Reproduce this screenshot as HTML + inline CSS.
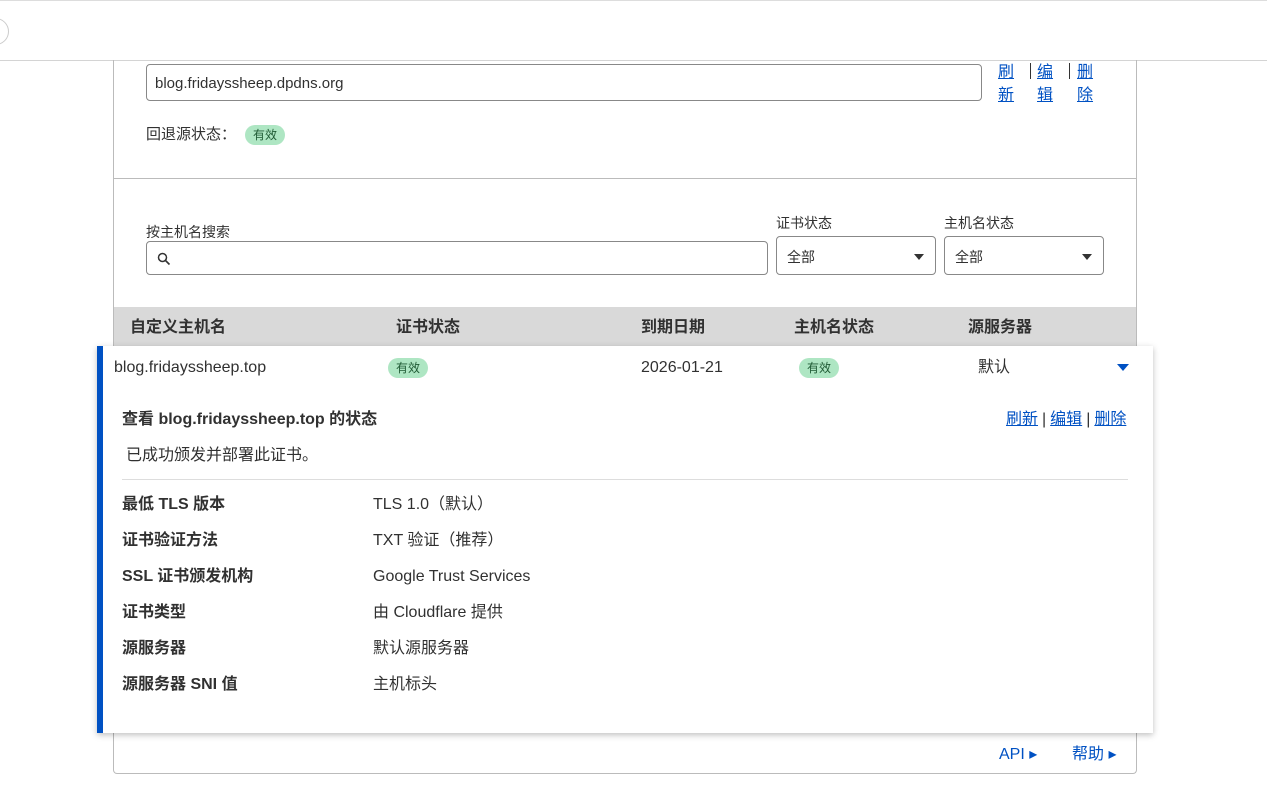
<!DOCTYPE html>
<html><head><meta charset="utf-8"><style>
*{box-sizing:border-box;margin:0;padding:0}
body{width:1267px;height:799px;overflow:hidden;background:#fff;font-family:"Liberation Sans","Noto Sans CJK SC",sans-serif;color:#313131;font-size:16px;position:relative}
.a{position:absolute;white-space:nowrap;line-height:20px}
.lnk{color:#0051c3;text-decoration:underline}
.badge{position:absolute;background:#aee6c3;color:#1f5a34;font-size:12px;border-radius:10px;height:20px;line-height:20px;padding:0 8px}
.box{position:absolute;border:1px solid #888;border-radius:4px;background:#fff}
.b{font-weight:bold}
.caret{position:absolute;width:0;height:0;border-left:5px solid transparent;border-right:5px solid transparent;border-top:6px solid #333}
.sep{margin:0 4px}
</style></head><body>
<div class="a" style="left:0;top:0;width:1267px;height:1px;background:#ddd"></div>
<div class="a" style="left:-18px;top:18px;width:27px;height:27px;border:1px solid #ccc;border-radius:50%"></div>
<div class="a" style="left:0;top:60px;width:1267px;height:1px;background:#d4d4d4"></div>
<div class="a" style="left:113px;top:60px;width:1024px;height:714px;border:1px solid #bbb;border-top:none;border-radius:0 0 4px 4px"></div>
<div class="box" style="left:146px;top:64px;width:836px;height:37px"></div>
<div class="a" style="left:155px;top:74px;font-size:15px">blog.fridayssheep.dpdns.org</div>
<div class="a lnk" style="left:998px;top:61px;font-size:16px;line-height:23px;white-space:normal;width:16px">刷新</div>
<div class="a" style="left:1030px;top:63px;width:1px;height:16px;background:#333"></div>
<div class="a lnk" style="left:1037px;top:61px;font-size:16px;line-height:23px;white-space:normal;width:16px">编辑</div>
<div class="a" style="left:1069px;top:63px;width:1px;height:16px;background:#333"></div>
<div class="a lnk" style="left:1077px;top:61px;font-size:16px;line-height:23px;white-space:normal;width:16px">删除</div>
<div class="a" style="left:146px;top:125px;font-size:15px">回退源状态：</div>
<div class="badge" style="left:245px;top:125px">有效</div>
<div class="a" style="left:114px;top:178px;width:1022px;height:1px;background:#bbb"></div>
<div class="a" style="left:146px;top:222px;font-size:14px">按主机名搜索</div>
<div class="box" style="left:146px;top:241px;width:622px;height:34px"></div>
<svg class="a" style="left:157px;top:252px" width="14" height="14" viewBox="0 0 14 14"><circle cx="5.5" cy="5.5" r="4" fill="none" stroke="#333" stroke-width="1.5"/><path d="M8.5 8.5L12.5 12.5" stroke="#333" stroke-width="1.6"/></svg>
<div class="a" style="left:776px;top:213px;font-size:14px">证书状态</div>
<div class="box" style="left:776px;top:236px;width:160px;height:39px"></div>
<div class="a" style="left:787px;top:247px;font-size:14px">全部</div>
<div class="caret" style="left:914px;top:254px"></div>
<div class="a" style="left:944px;top:213px;font-size:14px">主机名状态</div>
<div class="box" style="left:944px;top:236px;width:160px;height:39px"></div>
<div class="a" style="left:955px;top:247px;font-size:14px">全部</div>
<div class="caret" style="left:1082px;top:254px"></div>
<div class="a" style="left:114px;top:307px;width:1022px;height:40px;background:#d9d9d9"></div>
<div class="a b" style="left:130px;top:318px">自定义主机名</div>
<div class="a b" style="left:396px;top:318px">证书状态</div>
<div class="a b" style="left:641px;top:318px">到期日期</div>
<div class="a b" style="left:794px;top:318px">主机名状态</div>
<div class="a b" style="left:968px;top:318px">源服务器</div>
<div class="a" style="left:97px;top:346px;width:1056px;height:387px;background:#fff;box-shadow:0 2px 6px rgba(0,0,0,.25);border-left:6px solid #0051c3"></div>
<div class="a" style="left:114px;top:358px">blog.fridayssheep.top</div>
<div class="badge" style="left:388px;top:358px">有效</div>
<div class="a" style="left:641px;top:358px">2026-01-21</div>
<div class="badge" style="left:799px;top:358px">有效</div>
<div class="a" style="left:978px;top:358px">默认</div>
<div class="caret" style="left:1117px;top:364px;border-left-width:6px;border-right-width:6px;border-top:7px solid #0051c3"></div>
<div class="a b" style="left:122px;top:410px">查看 blog.fridayssheep.top 的状态</div>
<div class="a" style="left:1006px;top:410px"><span class="lnk">刷新</span><span class="sep">|</span><span class="lnk">编辑</span><span class="sep">|</span><span class="lnk">删除</span></div>
<div class="a" style="left:126px;top:446px">已成功颁发并部署此证书。</div>
<div class="a" style="left:122px;top:479px;width:1006px;height:1px;background:#ddd"></div>
<div class="a b" style="left:122px;top:495px">最低 TLS 版本</div><div class="a" style="left:373px;top:495px">TLS 1.0（默认）</div>
<div class="a b" style="left:122px;top:531px">证书验证方法</div><div class="a" style="left:373px;top:531px">TXT 验证（推荐）</div>
<div class="a b" style="left:122px;top:567px">SSL 证书颁发机构</div><div class="a" style="left:373px;top:567px">Google Trust Services</div>
<div class="a b" style="left:122px;top:603px">证书类型</div><div class="a" style="left:373px;top:603px">由 Cloudflare 提供</div>
<div class="a b" style="left:122px;top:639px">源服务器</div><div class="a" style="left:373px;top:639px">默认源服务器</div>
<div class="a b" style="left:122px;top:675px">源服务器 SNI 值</div><div class="a" style="left:373px;top:675px">主机标头</div>
<div class="a" style="left:999px;top:745px;color:#0051c3">API ▸</div>
<div class="a" style="left:1072px;top:745px;color:#0051c3">帮助 ▸</div>
</body></html>
